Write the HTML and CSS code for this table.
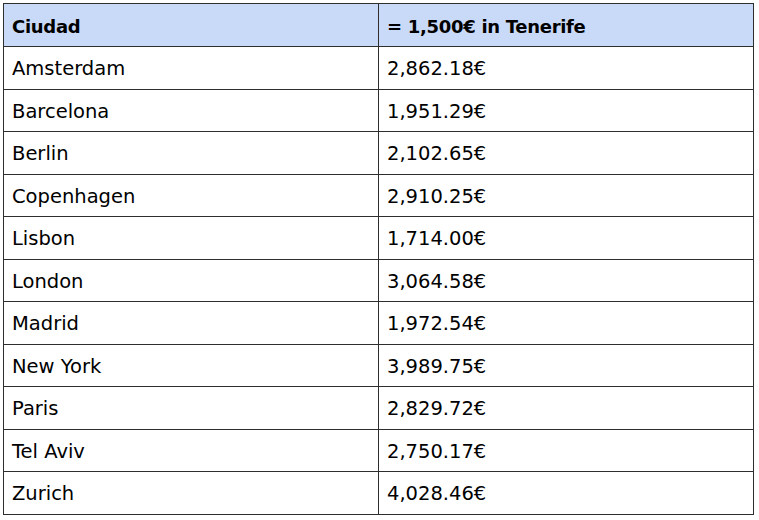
FILE: index.html
```html
<!DOCTYPE html>
<html>
<head>
<meta charset="utf-8">
<link rel="stylesheet" href="styles.css">
</head>
<body>
<table class="grid">
  <thead>
    <tr><th>Ciudad</th><th>= 1,500€ in Tenerife</th></tr>
  </thead>
  <tbody>
    <tr><td>Amsterdam</td><td>2,862.18€</td></tr>
    <tr><td>Barcelona</td><td>1,951.29€</td></tr>
    <tr><td>Berlin</td><td>2,102.65€</td></tr>
    <tr><td>Copenhagen</td><td>2,910.25€</td></tr>
    <tr><td>Lisbon</td><td>1,714.00€</td></tr>
    <tr><td>London</td><td>3,064.58€</td></tr>
    <tr><td>Madrid</td><td>1,972.54€</td></tr>
    <tr><td>New York</td><td>3,989.75€</td></tr>
    <tr><td>Paris</td><td>2,829.72€</td></tr>
    <tr><td>Tel Aviv</td><td>2,750.17€</td></tr>
    <tr><td>Zurich</td><td>4,028.46€</td></tr>
  </tbody>
</table>
</body>
</html>
```
FILE: styles.css
```css
html, body {
  margin: 0;
  padding: 0;
  background: #ffffff;
}
body {
  padding: 3px 0 0 3px;
  font-family: "DejaVu Sans", "Noto Sans", sans-serif;
  color: #000;
}
.grid {
  border-collapse: collapse;
  width: 751px;
  table-layout: fixed;
}
.grid th, .grid td {
  border: 1px solid #2e2e2e;
  text-align: left;
  padding: 2px 0 0 8px;
  height: 39.5px;
  vertical-align: middle;
}
.grid th:first-child, .grid td:first-child {
  width: 366px;
}
.grid th {
  background: #c9daf8;
  font-weight: 700;
  font-size: 18px;
  letter-spacing: -0.3px;
  height: 40px;
}
.grid td {
  font-weight: 400;
  font-size: 19.5px;
  letter-spacing: 0;
}
```
